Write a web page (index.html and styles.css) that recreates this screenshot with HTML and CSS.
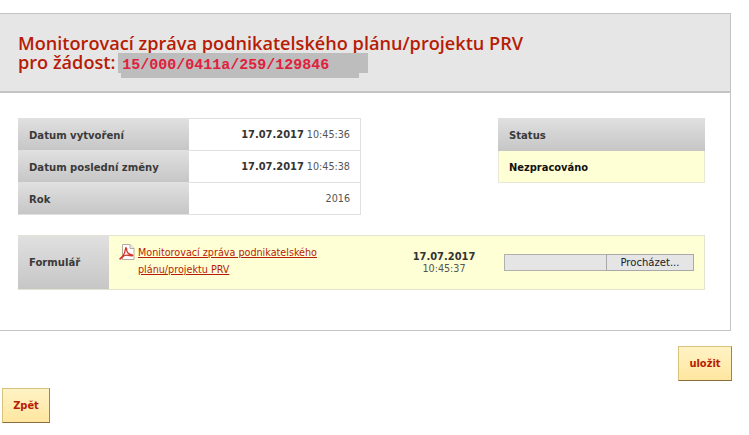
FILE: index.html

```html
<!DOCTYPE html>
<html lang="cs">
<head>
    <meta charset="UTF-8">
    <title>Monitorovací zpráva</title>
    <link rel="stylesheet" href="styles.css">
</head>
<body>
    <div class="panel">
        <div class="panel-head">
            <h1>Monitorovací zpráva podnikatelského plánu/projektu PRV<br>pro žádost: <span class="code">15/000/0411a/259/129846</span></h1>
        </div>
        <div class="panel-body">
            <div class="top-row">
                <div class="info">
                    <div class="info-row">
                        <div class="label">Datum vytvoření</div>
                        <div class="value"><b>17.07.2017</b> 10:45:36</div>
                    </div>
                    <div class="info-row">
                        <div class="label">Datum poslední změny</div>
                        <div class="value"><b>17.07.2017</b> 10:45:38</div>
                    </div>
                    <div class="info-row">
                        <div class="label">Rok</div>
                        <div class="value">2016</div>
                    </div>
                </div>
                <div class="status">
                    <div class="label">Status</div>
                    <div class="status-value">Nezpracováno</div>
                </div>
            </div>
            <div class="form-row">
                <div class="label form-label">Formulář</div>
                <div class="form-file">
                    <svg class="pdf-icon" width="16" height="17" viewBox="0 0 16 17">
                        <path d="M3.5 .5H11L15 4.5V15.500H3.500Z" fill="#fff" stroke="#b9a9a0"/>
                        <path d="M11 .5V4.500H15" fill="#eee" stroke="#b9a9a0"/>
                        <path d="M1 14.500C3.500 13 6 9 6.500 5C6.700 3 7.800 3.500 7.600 5.500C7.800 8.500 9.500 10.500 13.500 11C14.500 11.800 12.500 12.300 10.500 11.500C7.500 10.700 4.500 11.500 3 13.500C2 15 .7 15.500 1 14.500Z" fill="none" stroke="#d2352b" stroke-width="1.300"/>
                    </svg>
                    <a href="#">Monitorovací zpráva podnikatelského<br>plánu/projektu PRV</a>
                </div>
                <div class="form-date"><b>17.07.2017</b><br>10:45:37</div>
                <div class="form-upload">
                    <div class="file-box"></div>
                    <div class="file-btn">Procházet...</div>
                </div>
            </div>
        </div>
    </div>
    <div class="save-row"><a class="btn btn-save" href="#">uložit</a></div>
    <div class="back-row"><a class="btn" href="#">Zpět</a></div>
</body>
</html>
```

FILE: styles.css

```css
body {
    margin: 0;
    padding-top: 13px;
    width: 749px;
    height: 435px;
    box-sizing: border-box;
    overflow: hidden;
    background: #fff;
    font-family: "DejaVu Sans", Verdana, sans-serif;
    font-size: 10.7px;
    font-stretch: condensed;
    color: #333;
}
.panel {
    width: 730px;
    height: 316px;
    border: 1px solid #c4c4c4;
    border-left: none;
}
.panel-head {
    height: 77px;
    background: #e6e6e6;
    border-bottom: 2px solid #c4c4c4;
    padding-left: 18px;
}
h1 {
    margin: 0;
    padding-top: 20px;
    font-family: "Open Sans", "Noto Sans", sans-serif;
    font-size: 18.15px;
    font-stretch: normal;
    font-weight: 600;
    line-height: 19px;
    color: #b71c05;
}
.code {
    display: inline-block;
    width: 250px;
    height: 25px;
    margin-left: -2px;
    padding-left: 4px;
    box-sizing: border-box;
    vertical-align: top;
    font-family: "Liberation Mono", monospace;
    font-size: 15px;
    font-stretch: normal;
    font-weight: 700;
    line-height: 25px;
    color: #e0203c;
    background:
        linear-gradient(#bdbdbd, #bdbdbd) 0 0 / 250px 20px no-repeat,
        linear-gradient(#bdbdbd, #bdbdbd) 3px 0 / 238px 25px no-repeat;
}
.panel-body {
    padding: 25px 25px 0 18px;
}
.top-row {
    display: flex;
    justify-content: space-between;
}
.label {
    display: flex;
    align-items: center;
    padding: 2px 0 0 11px;
    font-weight: 700;
    font-size: 11.2px;
    color: #3a3a3a;
    background: linear-gradient(#e0e0e0, #c6c6c6);
}
.info {
    width: 343px;
    border: 1px solid #e0e0e0;
    border-left: none;
    box-sizing: border-box;
    background: #fff;
}
.info-row {
    display: grid;
    grid-template-columns: 171px 1fr;
    height: 32px;
    border-bottom: 1px solid #e0e0e0;
    box-sizing: border-box;
}
.info-row:last-child {
    height: 31px;
    border-bottom: none;
}
.value {
    display: flex;
    align-items: center;
    justify-content: flex-end;
    gap: 3px;
    padding-right: 10px;
    color: #555;
}
.value b {
    font-size: 11px;
    color: #333;
}
.status {
    width: 207px;
    display: flex;
    flex-direction: column;
}
.status .label {
    height: 33px;
    box-sizing: border-box;
}
.status-value {
    height: 32px;
    box-sizing: border-box;
    display: flex;
    align-items: center;
    padding: 2px 0 0 10px;
    font-weight: 700;
    font-size: 11px;
    color: #111;
    background: #ffffd5;
    border: 1px solid #e8e8d4;
    border-top: none;
}
.form-row {
    display: flex;
    width: 687px;
    height: 55px;
    margin-top: 20px;
    box-sizing: border-box;
    background: #ffffd5;
    border: 1px solid #e3e3d0;
    border-left: none;
}
.form-label {
    width: 80px;
    flex: none;
    padding-top: 0;
}
.form-file {
    display: flex;
    align-items: flex-start;
    gap: 3px;
    width: 275px;
    flex: none;
    padding: 8px 0 0 10px;
    box-sizing: border-box;
}
.form-file a {
    color: #b71c05;
    line-height: 17px;
}
.form-date {
    width: 120px;
    flex: none;
    padding-top: 15px;
    text-align: center;
    line-height: 12px;
    color: #555;
}
.form-date b {
    font-size: 11px;
    color: #333;
}
.form-upload {
    display: flex;
    height: 17px;
    margin-top: 18px;
}
.file-box {
    width: 102px;
    box-sizing: border-box;
    background: #e5e5e5;
    border: 1px solid #b0b0b0;
    border-right: none;
}
.file-btn {
    width: 88px;
    box-sizing: border-box;
    text-align: center;
    font-size: 11.2px;
    line-height: 15px;
    background: #e5e5e5;
    border: 1px solid #a8a8a8;
    color: #222;
}
.save-row {
    display: flex;
    justify-content: flex-end;
    width: 732px;
    margin-top: 15px;
}
.back-row {
    margin: 7px 0 0 2px;
}
.btn {
    display: flex;
    align-items: center;
    justify-content: center;
    width: 48px;
    height: 35px;
    box-sizing: border-box;
    font-weight: 700;
    font-size: 11px;
    text-decoration: none;
    color: #b71c05;
    background: linear-gradient(#fff3c4, #ffe6a0);
    border: 1px solid #d9c27c;
    border-bottom: 1px solid #8a6d3a;
    border-right: 1px solid #a08550;
}
.btn-save {
    width: 54px;
}
```
